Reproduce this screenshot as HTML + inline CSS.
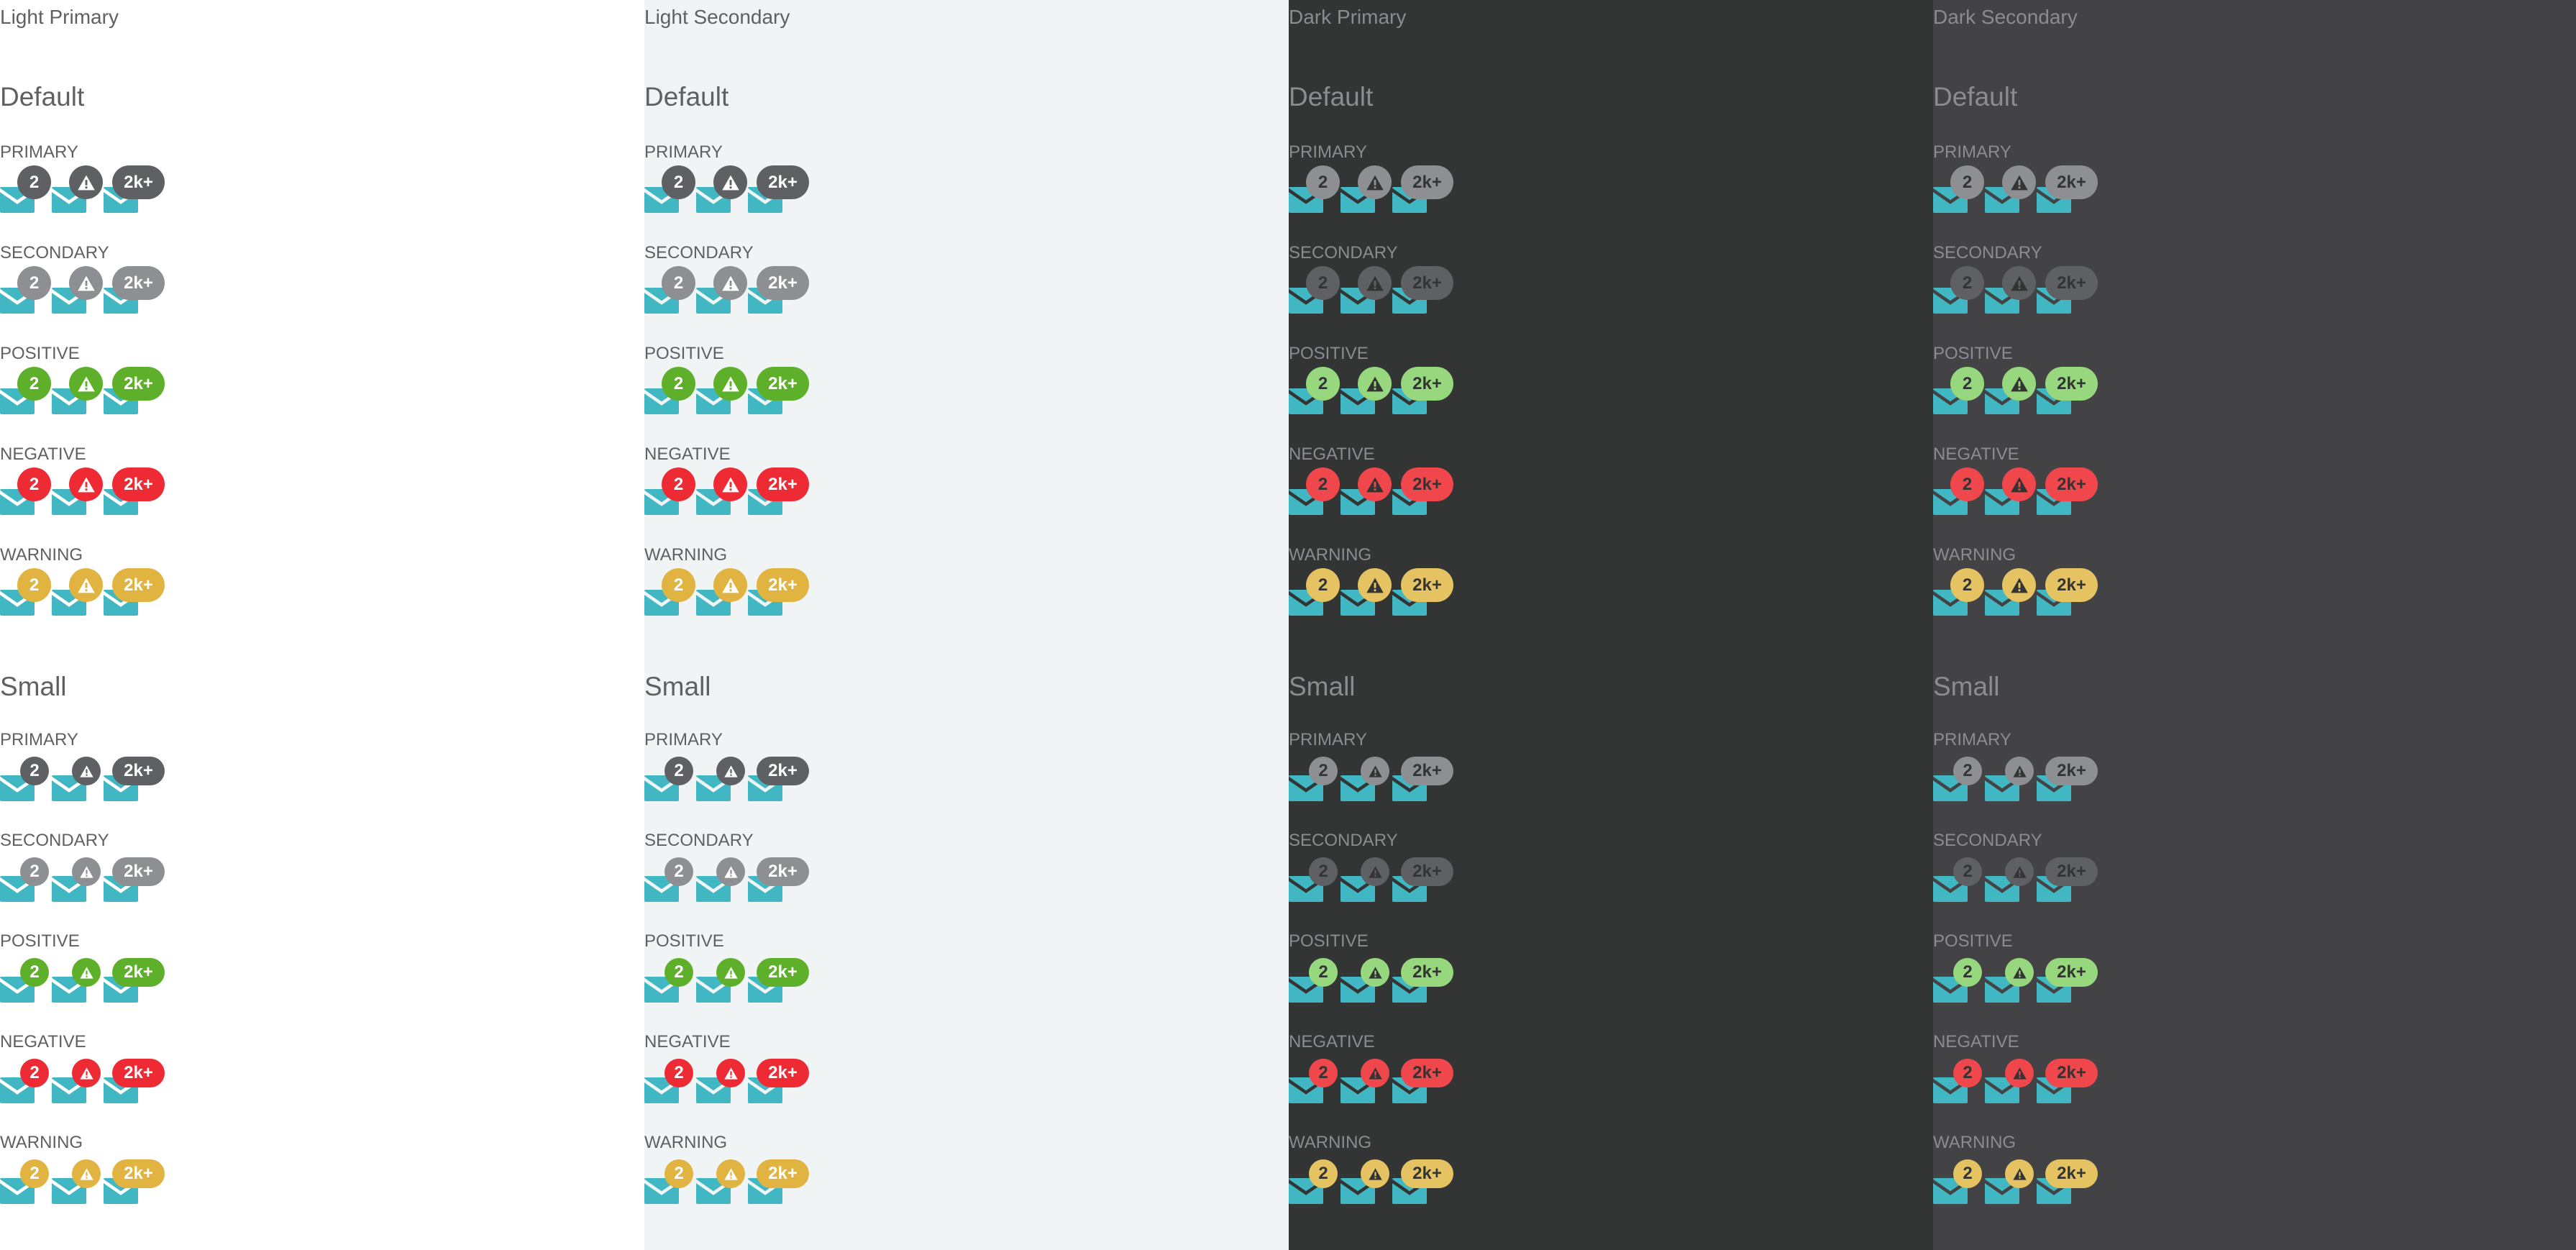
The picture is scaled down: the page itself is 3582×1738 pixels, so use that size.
<!DOCTYPE html>
<html><head><meta charset="utf-8"><style>
*{margin:0;padding:0;box-sizing:border-box}
body{width:3582px;height:1738px;overflow:hidden;font-family:"Liberation Sans",sans-serif;position:relative}
.col{position:absolute;top:0;height:1738px;width:896px}
.lp{left:0;background:#fff;--t:#5f6063;--bt:#fff;--bg:#fff}
.ls{left:896px;background:#f0f4f5;--t:#5f6063;--bt:#fff;--bg:#f0f4f5}
.dp{left:1792px;background:#333434;--t:#8b8c8f;--bt:#333434;--bg:#333434}
.ds{left:2688px;width:894px;background:#434345;--t:#8b8c8f;--bt:#333434;--bg:#434345}
.lp .pri,.ls .pri{--c:#5f6063}.lp .sec,.ls .sec{--c:#8e8f92}
.lp .pos,.ls .pos{--c:#5eb02b}.lp .neg,.ls .neg{--c:#ee2b35}.lp .war,.ls .war{--c:#e1b441}
.dp .pri,.ds .pri{--c:#8e8f92}.dp .sec,.ds .sec{--c:#5f6063}
.dp .pos,.ds .pos{--c:#97d87e}.dp .neg,.ds .neg{--c:#ef474b}.dp .war,.ds .war{--c:#e5c362}
.title{position:absolute;left:0;top:10px;font-size:28px;line-height:28px;color:var(--t);white-space:nowrap}
.h{position:absolute;left:0;font-size:37px;line-height:37px;color:var(--t)}
.r{position:absolute;left:0;width:300px;height:110px}
.r .l{position:absolute;left:0;top:0;font-size:24px;line-height:24px;color:var(--t)}
.e{position:absolute;width:48px;height:36px;top:60px}
.e svg{display:block}
.b{position:absolute;top:30px;height:47px;border-radius:24px;background:var(--c);color:var(--bt);font-weight:bold;font-size:24px;display:flex;align-items:center;justify-content:center}
.b1{left:24px;width:47px}.b2{left:96px;width:47px}.b3{left:156px;width:73px}
.s .b{top:35px;height:40px;border-radius:20px;font-size:24px}
.s .b1{left:28px;width:40px}.s .b2{left:100px;width:40px}
.s .e{top:61px}
.b svg{width:24px;height:22px;fill:currentColor}
.s .b svg{width:19px;height:17px}
</style></head><body>

<svg width="0" height="0" style="position:absolute"><defs>
<symbol id="env" viewBox="0 0 48 36"><rect width="48" height="36" rx="2" fill="#42b7c4"/><polyline points="-2,3 24,21 50,3" fill="none" stroke="var(--bg)" stroke-width="4.5"/></symbol>
<symbol id="wr" viewBox="0 0 22 20"><path fill-rule="evenodd" d="M11 0.5L21.8 19.5H0.2Z M9.7 6.5h2.6v6.8h-2.6z M9.7 14.8h2.6v2.6h-2.6z"/></symbol>
</defs></svg>

<!-- COLUMN 1 -->
<div class="col lp">
<div class="title">Light Primary</div>
<div class="h" style="top:116px">Default</div>
<div class="r pri" style="top:200px"><div class="l">PRIMARY</div><div class="e" style="left:0"><svg width="48" height="36"><use href="#env"/></svg></div><div class="e" style="left:72px"><svg width="48" height="36"><use href="#env"/></svg></div><div class="e" style="left:144px"><svg width="48" height="36"><use href="#env"/></svg></div><div class="b b1">2</div><div class="b b2"><svg><use href="#wr"/></svg></div><div class="b b3">2k+</div></div>
<div class="r sec" style="top:340px"><div class="l">SECONDARY</div><div class="e" style="left:0"><svg width="48" height="36"><use href="#env"/></svg></div><div class="e" style="left:72px"><svg width="48" height="36"><use href="#env"/></svg></div><div class="e" style="left:144px"><svg width="48" height="36"><use href="#env"/></svg></div><div class="b b1">2</div><div class="b b2"><svg><use href="#wr"/></svg></div><div class="b b3">2k+</div></div>
<div class="r pos" style="top:480px"><div class="l">POSITIVE</div><div class="e" style="left:0"><svg width="48" height="36"><use href="#env"/></svg></div><div class="e" style="left:72px"><svg width="48" height="36"><use href="#env"/></svg></div><div class="e" style="left:144px"><svg width="48" height="36"><use href="#env"/></svg></div><div class="b b1">2</div><div class="b b2"><svg><use href="#wr"/></svg></div><div class="b b3">2k+</div></div>
<div class="r neg" style="top:620px"><div class="l">NEGATIVE</div><div class="e" style="left:0"><svg width="48" height="36"><use href="#env"/></svg></div><div class="e" style="left:72px"><svg width="48" height="36"><use href="#env"/></svg></div><div class="e" style="left:144px"><svg width="48" height="36"><use href="#env"/></svg></div><div class="b b1">2</div><div class="b b2"><svg><use href="#wr"/></svg></div><div class="b b3">2k+</div></div>
<div class="r war" style="top:760px"><div class="l">WARNING</div><div class="e" style="left:0"><svg width="48" height="36"><use href="#env"/></svg></div><div class="e" style="left:72px"><svg width="48" height="36"><use href="#env"/></svg></div><div class="e" style="left:144px"><svg width="48" height="36"><use href="#env"/></svg></div><div class="b b1">2</div><div class="b b2"><svg><use href="#wr"/></svg></div><div class="b b3">2k+</div></div>
<div class="h" style="top:936px">Small</div>
<div class="r s pri" style="top:1017px"><div class="l">PRIMARY</div><div class="e" style="left:0"><svg width="48" height="36"><use href="#env"/></svg></div><div class="e" style="left:72px"><svg width="48" height="36"><use href="#env"/></svg></div><div class="e" style="left:144px"><svg width="48" height="36"><use href="#env"/></svg></div><div class="b b1">2</div><div class="b b2"><svg><use href="#wr"/></svg></div><div class="b b3">2k+</div></div>
<div class="r s sec" style="top:1157px"><div class="l">SECONDARY</div><div class="e" style="left:0"><svg width="48" height="36"><use href="#env"/></svg></div><div class="e" style="left:72px"><svg width="48" height="36"><use href="#env"/></svg></div><div class="e" style="left:144px"><svg width="48" height="36"><use href="#env"/></svg></div><div class="b b1">2</div><div class="b b2"><svg><use href="#wr"/></svg></div><div class="b b3">2k+</div></div>
<div class="r s pos" style="top:1297px"><div class="l">POSITIVE</div><div class="e" style="left:0"><svg width="48" height="36"><use href="#env"/></svg></div><div class="e" style="left:72px"><svg width="48" height="36"><use href="#env"/></svg></div><div class="e" style="left:144px"><svg width="48" height="36"><use href="#env"/></svg></div><div class="b b1">2</div><div class="b b2"><svg><use href="#wr"/></svg></div><div class="b b3">2k+</div></div>
<div class="r s neg" style="top:1437px"><div class="l">NEGATIVE</div><div class="e" style="left:0"><svg width="48" height="36"><use href="#env"/></svg></div><div class="e" style="left:72px"><svg width="48" height="36"><use href="#env"/></svg></div><div class="e" style="left:144px"><svg width="48" height="36"><use href="#env"/></svg></div><div class="b b1">2</div><div class="b b2"><svg><use href="#wr"/></svg></div><div class="b b3">2k+</div></div>
<div class="r s war" style="top:1577px"><div class="l">WARNING</div><div class="e" style="left:0"><svg width="48" height="36"><use href="#env"/></svg></div><div class="e" style="left:72px"><svg width="48" height="36"><use href="#env"/></svg></div><div class="e" style="left:144px"><svg width="48" height="36"><use href="#env"/></svg></div><div class="b b1">2</div><div class="b b2"><svg><use href="#wr"/></svg></div><div class="b b3">2k+</div></div>
</div>

<!-- COLUMN 2 -->
<div class="col ls">
<div class="title">Light Secondary</div>
<div class="h" style="top:116px">Default</div>
<div class="r pri" style="top:200px"><div class="l">PRIMARY</div><div class="e" style="left:0"><svg width="48" height="36"><use href="#env"/></svg></div><div class="e" style="left:72px"><svg width="48" height="36"><use href="#env"/></svg></div><div class="e" style="left:144px"><svg width="48" height="36"><use href="#env"/></svg></div><div class="b b1">2</div><div class="b b2"><svg><use href="#wr"/></svg></div><div class="b b3">2k+</div></div>
<div class="r sec" style="top:340px"><div class="l">SECONDARY</div><div class="e" style="left:0"><svg width="48" height="36"><use href="#env"/></svg></div><div class="e" style="left:72px"><svg width="48" height="36"><use href="#env"/></svg></div><div class="e" style="left:144px"><svg width="48" height="36"><use href="#env"/></svg></div><div class="b b1">2</div><div class="b b2"><svg><use href="#wr"/></svg></div><div class="b b3">2k+</div></div>
<div class="r pos" style="top:480px"><div class="l">POSITIVE</div><div class="e" style="left:0"><svg width="48" height="36"><use href="#env"/></svg></div><div class="e" style="left:72px"><svg width="48" height="36"><use href="#env"/></svg></div><div class="e" style="left:144px"><svg width="48" height="36"><use href="#env"/></svg></div><div class="b b1">2</div><div class="b b2"><svg><use href="#wr"/></svg></div><div class="b b3">2k+</div></div>
<div class="r neg" style="top:620px"><div class="l">NEGATIVE</div><div class="e" style="left:0"><svg width="48" height="36"><use href="#env"/></svg></div><div class="e" style="left:72px"><svg width="48" height="36"><use href="#env"/></svg></div><div class="e" style="left:144px"><svg width="48" height="36"><use href="#env"/></svg></div><div class="b b1">2</div><div class="b b2"><svg><use href="#wr"/></svg></div><div class="b b3">2k+</div></div>
<div class="r war" style="top:760px"><div class="l">WARNING</div><div class="e" style="left:0"><svg width="48" height="36"><use href="#env"/></svg></div><div class="e" style="left:72px"><svg width="48" height="36"><use href="#env"/></svg></div><div class="e" style="left:144px"><svg width="48" height="36"><use href="#env"/></svg></div><div class="b b1">2</div><div class="b b2"><svg><use href="#wr"/></svg></div><div class="b b3">2k+</div></div>
<div class="h" style="top:936px">Small</div>
<div class="r s pri" style="top:1017px"><div class="l">PRIMARY</div><div class="e" style="left:0"><svg width="48" height="36"><use href="#env"/></svg></div><div class="e" style="left:72px"><svg width="48" height="36"><use href="#env"/></svg></div><div class="e" style="left:144px"><svg width="48" height="36"><use href="#env"/></svg></div><div class="b b1">2</div><div class="b b2"><svg><use href="#wr"/></svg></div><div class="b b3">2k+</div></div>
<div class="r s sec" style="top:1157px"><div class="l">SECONDARY</div><div class="e" style="left:0"><svg width="48" height="36"><use href="#env"/></svg></div><div class="e" style="left:72px"><svg width="48" height="36"><use href="#env"/></svg></div><div class="e" style="left:144px"><svg width="48" height="36"><use href="#env"/></svg></div><div class="b b1">2</div><div class="b b2"><svg><use href="#wr"/></svg></div><div class="b b3">2k+</div></div>
<div class="r s pos" style="top:1297px"><div class="l">POSITIVE</div><div class="e" style="left:0"><svg width="48" height="36"><use href="#env"/></svg></div><div class="e" style="left:72px"><svg width="48" height="36"><use href="#env"/></svg></div><div class="e" style="left:144px"><svg width="48" height="36"><use href="#env"/></svg></div><div class="b b1">2</div><div class="b b2"><svg><use href="#wr"/></svg></div><div class="b b3">2k+</div></div>
<div class="r s neg" style="top:1437px"><div class="l">NEGATIVE</div><div class="e" style="left:0"><svg width="48" height="36"><use href="#env"/></svg></div><div class="e" style="left:72px"><svg width="48" height="36"><use href="#env"/></svg></div><div class="e" style="left:144px"><svg width="48" height="36"><use href="#env"/></svg></div><div class="b b1">2</div><div class="b b2"><svg><use href="#wr"/></svg></div><div class="b b3">2k+</div></div>
<div class="r s war" style="top:1577px"><div class="l">WARNING</div><div class="e" style="left:0"><svg width="48" height="36"><use href="#env"/></svg></div><div class="e" style="left:72px"><svg width="48" height="36"><use href="#env"/></svg></div><div class="e" style="left:144px"><svg width="48" height="36"><use href="#env"/></svg></div><div class="b b1">2</div><div class="b b2"><svg><use href="#wr"/></svg></div><div class="b b3">2k+</div></div>
</div>

<!-- COLUMN 3 -->
<div class="col dp">
<div class="title">Dark Primary</div>
<div class="h" style="top:116px">Default</div>
<div class="r pri" style="top:200px"><div class="l">PRIMARY</div><div class="e" style="left:0"><svg width="48" height="36"><use href="#env"/></svg></div><div class="e" style="left:72px"><svg width="48" height="36"><use href="#env"/></svg></div><div class="e" style="left:144px"><svg width="48" height="36"><use href="#env"/></svg></div><div class="b b1">2</div><div class="b b2"><svg><use href="#wr"/></svg></div><div class="b b3">2k+</div></div>
<div class="r sec" style="top:340px"><div class="l">SECONDARY</div><div class="e" style="left:0"><svg width="48" height="36"><use href="#env"/></svg></div><div class="e" style="left:72px"><svg width="48" height="36"><use href="#env"/></svg></div><div class="e" style="left:144px"><svg width="48" height="36"><use href="#env"/></svg></div><div class="b b1">2</div><div class="b b2"><svg><use href="#wr"/></svg></div><div class="b b3">2k+</div></div>
<div class="r pos" style="top:480px"><div class="l">POSITIVE</div><div class="e" style="left:0"><svg width="48" height="36"><use href="#env"/></svg></div><div class="e" style="left:72px"><svg width="48" height="36"><use href="#env"/></svg></div><div class="e" style="left:144px"><svg width="48" height="36"><use href="#env"/></svg></div><div class="b b1">2</div><div class="b b2"><svg><use href="#wr"/></svg></div><div class="b b3">2k+</div></div>
<div class="r neg" style="top:620px"><div class="l">NEGATIVE</div><div class="e" style="left:0"><svg width="48" height="36"><use href="#env"/></svg></div><div class="e" style="left:72px"><svg width="48" height="36"><use href="#env"/></svg></div><div class="e" style="left:144px"><svg width="48" height="36"><use href="#env"/></svg></div><div class="b b1">2</div><div class="b b2"><svg><use href="#wr"/></svg></div><div class="b b3">2k+</div></div>
<div class="r war" style="top:760px"><div class="l">WARNING</div><div class="e" style="left:0"><svg width="48" height="36"><use href="#env"/></svg></div><div class="e" style="left:72px"><svg width="48" height="36"><use href="#env"/></svg></div><div class="e" style="left:144px"><svg width="48" height="36"><use href="#env"/></svg></div><div class="b b1">2</div><div class="b b2"><svg><use href="#wr"/></svg></div><div class="b b3">2k+</div></div>
<div class="h" style="top:936px">Small</div>
<div class="r s pri" style="top:1017px"><div class="l">PRIMARY</div><div class="e" style="left:0"><svg width="48" height="36"><use href="#env"/></svg></div><div class="e" style="left:72px"><svg width="48" height="36"><use href="#env"/></svg></div><div class="e" style="left:144px"><svg width="48" height="36"><use href="#env"/></svg></div><div class="b b1">2</div><div class="b b2"><svg><use href="#wr"/></svg></div><div class="b b3">2k+</div></div>
<div class="r s sec" style="top:1157px"><div class="l">SECONDARY</div><div class="e" style="left:0"><svg width="48" height="36"><use href="#env"/></svg></div><div class="e" style="left:72px"><svg width="48" height="36"><use href="#env"/></svg></div><div class="e" style="left:144px"><svg width="48" height="36"><use href="#env"/></svg></div><div class="b b1">2</div><div class="b b2"><svg><use href="#wr"/></svg></div><div class="b b3">2k+</div></div>
<div class="r s pos" style="top:1297px"><div class="l">POSITIVE</div><div class="e" style="left:0"><svg width="48" height="36"><use href="#env"/></svg></div><div class="e" style="left:72px"><svg width="48" height="36"><use href="#env"/></svg></div><div class="e" style="left:144px"><svg width="48" height="36"><use href="#env"/></svg></div><div class="b b1">2</div><div class="b b2"><svg><use href="#wr"/></svg></div><div class="b b3">2k+</div></div>
<div class="r s neg" style="top:1437px"><div class="l">NEGATIVE</div><div class="e" style="left:0"><svg width="48" height="36"><use href="#env"/></svg></div><div class="e" style="left:72px"><svg width="48" height="36"><use href="#env"/></svg></div><div class="e" style="left:144px"><svg width="48" height="36"><use href="#env"/></svg></div><div class="b b1">2</div><div class="b b2"><svg><use href="#wr"/></svg></div><div class="b b3">2k+</div></div>
<div class="r s war" style="top:1577px"><div class="l">WARNING</div><div class="e" style="left:0"><svg width="48" height="36"><use href="#env"/></svg></div><div class="e" style="left:72px"><svg width="48" height="36"><use href="#env"/></svg></div><div class="e" style="left:144px"><svg width="48" height="36"><use href="#env"/></svg></div><div class="b b1">2</div><div class="b b2"><svg><use href="#wr"/></svg></div><div class="b b3">2k+</div></div>
</div>

<!-- COLUMN 4 -->
<div class="col ds">
<div class="title">Dark Secondary</div>
<div class="h" style="top:116px">Default</div>
<div class="r pri" style="top:200px"><div class="l">PRIMARY</div><div class="e" style="left:0"><svg width="48" height="36"><use href="#env"/></svg></div><div class="e" style="left:72px"><svg width="48" height="36"><use href="#env"/></svg></div><div class="e" style="left:144px"><svg width="48" height="36"><use href="#env"/></svg></div><div class="b b1">2</div><div class="b b2"><svg><use href="#wr"/></svg></div><div class="b b3">2k+</div></div>
<div class="r sec" style="top:340px"><div class="l">SECONDARY</div><div class="e" style="left:0"><svg width="48" height="36"><use href="#env"/></svg></div><div class="e" style="left:72px"><svg width="48" height="36"><use href="#env"/></svg></div><div class="e" style="left:144px"><svg width="48" height="36"><use href="#env"/></svg></div><div class="b b1">2</div><div class="b b2"><svg><use href="#wr"/></svg></div><div class="b b3">2k+</div></div>
<div class="r pos" style="top:480px"><div class="l">POSITIVE</div><div class="e" style="left:0"><svg width="48" height="36"><use href="#env"/></svg></div><div class="e" style="left:72px"><svg width="48" height="36"><use href="#env"/></svg></div><div class="e" style="left:144px"><svg width="48" height="36"><use href="#env"/></svg></div><div class="b b1">2</div><div class="b b2"><svg><use href="#wr"/></svg></div><div class="b b3">2k+</div></div>
<div class="r neg" style="top:620px"><div class="l">NEGATIVE</div><div class="e" style="left:0"><svg width="48" height="36"><use href="#env"/></svg></div><div class="e" style="left:72px"><svg width="48" height="36"><use href="#env"/></svg></div><div class="e" style="left:144px"><svg width="48" height="36"><use href="#env"/></svg></div><div class="b b1">2</div><div class="b b2"><svg><use href="#wr"/></svg></div><div class="b b3">2k+</div></div>
<div class="r war" style="top:760px"><div class="l">WARNING</div><div class="e" style="left:0"><svg width="48" height="36"><use href="#env"/></svg></div><div class="e" style="left:72px"><svg width="48" height="36"><use href="#env"/></svg></div><div class="e" style="left:144px"><svg width="48" height="36"><use href="#env"/></svg></div><div class="b b1">2</div><div class="b b2"><svg><use href="#wr"/></svg></div><div class="b b3">2k+</div></div>
<div class="h" style="top:936px">Small</div>
<div class="r s pri" style="top:1017px"><div class="l">PRIMARY</div><div class="e" style="left:0"><svg width="48" height="36"><use href="#env"/></svg></div><div class="e" style="left:72px"><svg width="48" height="36"><use href="#env"/></svg></div><div class="e" style="left:144px"><svg width="48" height="36"><use href="#env"/></svg></div><div class="b b1">2</div><div class="b b2"><svg><use href="#wr"/></svg></div><div class="b b3">2k+</div></div>
<div class="r s sec" style="top:1157px"><div class="l">SECONDARY</div><div class="e" style="left:0"><svg width="48" height="36"><use href="#env"/></svg></div><div class="e" style="left:72px"><svg width="48" height="36"><use href="#env"/></svg></div><div class="e" style="left:144px"><svg width="48" height="36"><use href="#env"/></svg></div><div class="b b1">2</div><div class="b b2"><svg><use href="#wr"/></svg></div><div class="b b3">2k+</div></div>
<div class="r s pos" style="top:1297px"><div class="l">POSITIVE</div><div class="e" style="left:0"><svg width="48" height="36"><use href="#env"/></svg></div><div class="e" style="left:72px"><svg width="48" height="36"><use href="#env"/></svg></div><div class="e" style="left:144px"><svg width="48" height="36"><use href="#env"/></svg></div><div class="b b1">2</div><div class="b b2"><svg><use href="#wr"/></svg></div><div class="b b3">2k+</div></div>
<div class="r s neg" style="top:1437px"><div class="l">NEGATIVE</div><div class="e" style="left:0"><svg width="48" height="36"><use href="#env"/></svg></div><div class="e" style="left:72px"><svg width="48" height="36"><use href="#env"/></svg></div><div class="e" style="left:144px"><svg width="48" height="36"><use href="#env"/></svg></div><div class="b b1">2</div><div class="b b2"><svg><use href="#wr"/></svg></div><div class="b b3">2k+</div></div>
<div class="r s war" style="top:1577px"><div class="l">WARNING</div><div class="e" style="left:0"><svg width="48" height="36"><use href="#env"/></svg></div><div class="e" style="left:72px"><svg width="48" height="36"><use href="#env"/></svg></div><div class="e" style="left:144px"><svg width="48" height="36"><use href="#env"/></svg></div><div class="b b1">2</div><div class="b b2"><svg><use href="#wr"/></svg></div><div class="b b3">2k+</div></div>
</div>

</body></html>
